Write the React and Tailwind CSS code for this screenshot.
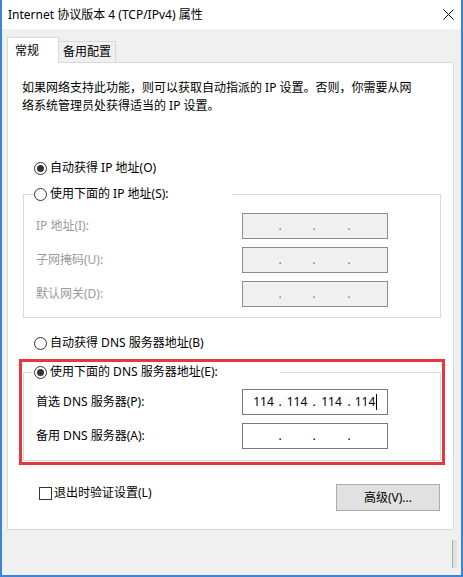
import React from 'react';

const font = "font-['Noto_Sans','Noto_Sans_CJK_SC',sans-serif]";

function Radio({ checked }) {
  return (
    <span className="w-[13px] h-[13px] rounded-full border border-[#333333] bg-white flex items-center justify-center shrink-0">
      {checked && <span className="w-[7px] h-[7px] rounded-full bg-[#333333]" />}
    </span>
  );
}

function IpBox({ values, disabled, cursor }) {
  const parts = values || ['', '', '', ''];
  const widths = ['w-[29px]', 'w-[30px]', 'w-[31px]', 'w-[30px]'];
  return (
    <div
      className={
        disabled
          ? 'w-[146px] h-[26px] border border-[#8c8c8c] bg-[#f0f0f0] text-[#7a7a7a] flex items-center pl-[6px]'
          : 'w-[146px] h-[26px] border border-[#7a7a7a] bg-white text-black flex items-center pl-[6px]'
      }
    >
      {parts.map((p, i) => (
        <React.Fragment key={i}>
          {i > 0 && <span className="w-[4px] text-center leading-none">.</span>}
          <span className={`${widths[i]} flex items-center justify-center leading-none`}>
            {p}
            {cursor && i === 3 && <span className="ml-[1px] w-px h-[16px] bg-black" />}
          </span>
        </React.Fragment>
      ))}
    </div>
  );
}

function Row({ label, disabled, values, cursor }) {
  return (
    <div className="flex items-center h-[26px]">
      <span className={disabled ? 'w-[218px] pl-[12px] text-[#9a9a9a]' : 'w-[218px] pl-[12px]'}>{label}</span>
      <IpBox disabled={disabled} values={values} cursor={cursor} />
    </div>
  );
}

export default function App() {
  return (
    <div className={`w-[463px] h-[577px] bg-[#f0f0f0] border-x-2 border-b-2 border-[#3c85d6] flex flex-col text-[12px] text-black ${font}`}>
      <div className="h-[29px] bg-white flex items-center justify-between pl-[6px] pr-[7px] shrink-0">
        <span>Internet 协议版本 4 (TCP/IPv4) 属性</span>
        <svg width="11" height="11" viewBox="0 0 11 11">
          <path d="M0.5 0.5 L10.5 10.5 M10.5 0.5 L0.5 10.5" stroke="#000" strokeWidth="1" fill="none" />
        </svg>
      </div>

      <div className="px-[5px] pt-[8px]">
        <div className="flex items-end h-[25px]">
          <div className="relative z-10 -mb-px w-[52px] h-[26px] bg-white border border-b-0 border-[#d9d9d9] flex items-center pl-[7px]">
            常规
          </div>
          <div className="w-[57px] h-[21px] bg-[#f0f0f0] border border-l-0 border-b-0 border-[#d9d9d9] flex items-center justify-center">
            备用配置
          </div>
        </div>

        <div className="w-[447px] h-[468px] bg-white border border-[#d9d9d9] pt-[16px]">
          <p className="pl-[14px] leading-[18px]">
            如果网络支持此功能，则可以获取自动指派的 IP 设置。否则，你需要从网
            <br />
            络系统管理员处获得适当的 IP 设置。
          </p>

          <div className="mt-[44px] pl-[26px] h-[18px] flex items-center gap-[3px]">
            <Radio checked />
            <span>自动获得 IP 地址(O)</span>
          </div>

          <fieldset className="mt-[8px] ml-[15px] w-[418px] border border-[#dcdcdc] pb-[10px]">
            <legend className="ml-[10px] w-[198px]">
              <div className="h-[18px] flex items-center gap-[3px]">
                <Radio />
                <span>使用下面的 IP 地址(S):</span>
              </div>
            </legend>
            <div className="pt-[10px] flex flex-col gap-[8px]">
              <Row label="IP 地址(I):" disabled />
              <Row label="子网掩码(U):" disabled />
              <Row label="默认网关(D):" disabled />
            </div>
          </fieldset>

          <div className="mt-[16px] pl-[26px] h-[18px] flex items-center gap-[3px]">
            <Radio />
            <span>自动获得 DNS 服务器地址(B)</span>
          </div>

          <div className="relative mt-[11px] ml-[15px] w-[418px]">
            <fieldset className="border border-[#dcdcdc] pb-[11px]">
              <legend className="ml-[10px] w-[246px]">
                <div className="h-[18px] flex items-center gap-[3px]">
                  <Radio checked />
                  <span>使用下面的 DNS 服务器地址(E):</span>
                </div>
              </legend>
              <div className="pt-[8px] flex flex-col gap-[8px]">
                <Row label="首选 DNS 服务器(P):" values={['114', '114', '114', '114']} cursor />
                <Row label="备用 DNS 服务器(A):" />
              </div>
            </fieldset>
            <div className="absolute -inset-[4px] border-[3px] border-[#e3393c] pointer-events-none" />
          </div>

          <div className="mt-[23px] pl-[31px] pr-[13px] flex items-start justify-between">
            <div className="h-[18px] flex items-center gap-[2px]">
              <span className="w-[13px] h-[13px] border border-[#333333] bg-white shrink-0" />
              <span>退出时验证设置(L)</span>
            </div>
            <button className="w-[104px] h-[27px] bg-[#e1e1e1] border border-[#adadad] flex items-center justify-center">
              高级(V)...
            </button>
          </div>
        </div>
      </div>

      <div className="flex-1 flex justify-end pt-[10px] pr-[4px]">
        <div className="w-[5px] h-[28px] bg-[#e1e1e1] border-l border-[#adadad]" />
      </div>
    </div>
  );
}
